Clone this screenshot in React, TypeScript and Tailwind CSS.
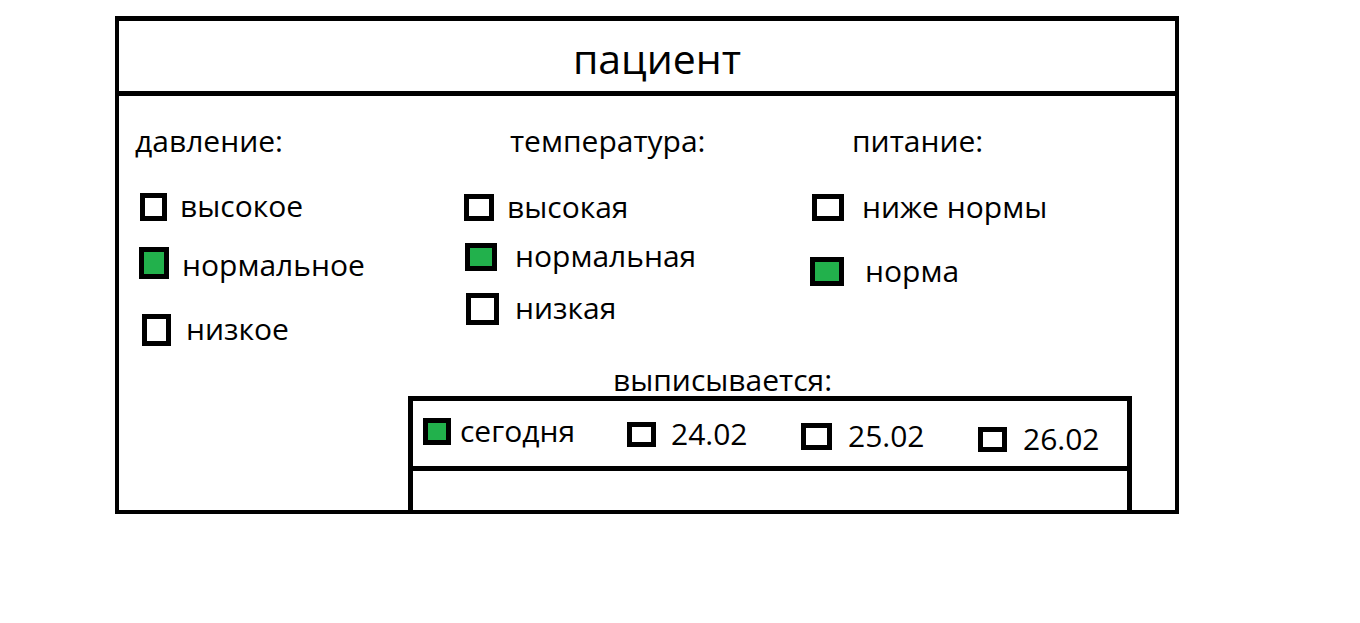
import type { ReactNode } from 'react';

type BoxProps = {
    w: number;
    h: number;
    checked?: boolean;
    className?: string;
};

// Paint-style square: thick black frame, green fill when checked
const Box = ({ w, h, checked, className }: BoxProps) => (
    <div
        className={`shrink-0 box-border border-[5px] border-black ${checked ? 'bg-[#22b14c]' : 'bg-white'} ${className ?? ''}`}
        style={{ width: w, height: h }}
    />
);

type RowProps = {
    w: number;
    h: number;
    checked?: boolean;
    boxClass?: string;
    gapClass: string;
    rowClass: string;
    children: ReactNode;
};

const Row = ({ w, h, checked, boxClass, gapClass, rowClass, children }: RowProps) => (
    <div className={`flex items-center ${rowClass}`} style={{ height: h }}>
        <Box w={w} h={h} checked={checked} className={boxClass} />
        <span className={`whitespace-nowrap text-[30px] leading-[36px] -mt-[2px] ${gapClass}`}>{children}</span>
    </div>
);

export default function App() {
    return (
        <div className="w-[1360px] h-[623px] bg-white text-black font-['Open_Sans',sans-serif] pt-[16px] pl-[115px]">
            <div className="w-[1064px] h-[498px] box-border border-4 border-t-[5px] border-black flex flex-col">
                {/* header */}
                <div className="h-[75px] shrink-0 border-b-[5px] border-black flex items-center justify-center pt-[4px] pl-[20px]">
                    <span className="text-[41px] leading-[46px]">пациент</span>
                </div>

                {/* body */}
                <div className="flex-1 flex flex-col">
                    <div className="flex pl-[16px] pt-[25px]">
                        {/* давление */}
                        <div className="w-[329px] flex flex-col">
                            <div className="text-[30px] leading-[40px]">давление:</div>
                            <Row w={27} h={28} rowClass="mt-[32px]" boxClass="ml-[5px]" gapClass="ml-[13px]">
                                высокое
                            </Row>
                            <Row w={30} h={32} checked rowClass="mt-[26px]" boxClass="ml-[4px]" gapClass="ml-[13px] pt-[5px]">
                                нормальное
                            </Row>
                            <Row w={29} h={32} rowClass="mt-[35px]" boxClass="ml-[7px]" gapClass="ml-[15px]">
                                низкое
                            </Row>
                        </div>

                        {/* температура */}
                        <div className="w-[346px] flex flex-col">
                            <div className="text-[30px] leading-[40px] ml-[46px]">температура:</div>
                            <Row w={30} h={27} rowClass="mt-[33px]" gapClass="ml-[13px]">
                                высокая
                            </Row>
                            <Row w={32} h={28} checked rowClass="mt-[22px]" boxClass="ml-[1px]" gapClass="ml-[18px]">
                                нормальная
                            </Row>
                            <Row w={33} h={32} rowClass="mt-[22px]" boxClass="ml-[2px]" gapClass="ml-[16px]">
                                низкая
                            </Row>
                        </div>

                        {/* питание */}
                        <div className="flex-1 flex flex-col">
                            <div className="text-[30px] leading-[40px] ml-[42px]">питание:</div>
                            <Row w={32} h={27} rowClass="mt-[33px]" boxClass="ml-[2px]" gapClass="ml-[18px]">
                                ниже нормы
                            </Row>
                            <Row w={34} h={29} checked rowClass="mt-[36px]" gapClass="ml-[21px]">
                                норма
                            </Row>
                        </div>
                    </div>

                    {/* выписывается */}
                    <div className="ml-[494px] mt-[18px] text-[30px] leading-[32px]">выписывается:</div>
                    <div className="ml-[289px] w-[724px] flex-1 box-border border-x-[5px] border-t-[5px] border-black flex flex-col">
                        <div className="h-[65px] shrink-0 flex items-start pl-[10px]">
                            <div className="w-[204px]">
                                <Row w={28} h={27} checked rowClass="mt-[17px]" gapClass="ml-[9px]">
                                    сегодня
                                </Row>
                            </div>
                            <div className="w-[174px]">
                                <Row w={29} h={25} rowClass="mt-[21px]" gapClass="ml-[15px]">
                                    24.02
                                </Row>
                            </div>
                            <div className="w-[177px]">
                                <Row w={31} h={27} rowClass="mt-[22px]" gapClass="ml-[16px]">
                                    25.02
                                </Row>
                            </div>
                            <div className="flex-1">
                                <Row w={29} h={25} rowClass="mt-[26px]" gapClass="ml-[16px]">
                                    26.02
                                </Row>
                            </div>
                        </div>
                        <div className="flex-1 border-t-[5px] border-black" />
                    </div>
                </div>
            </div>
        </div>
    );
}
